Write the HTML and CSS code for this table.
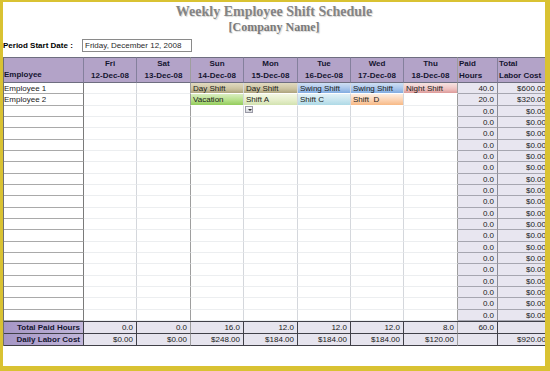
FILE: index.html
```html
<!DOCTYPE html>
<html>
<head>
<meta charset="utf-8">
<link rel="stylesheet" href="styles.css">
</head>
<body>
<div class="frame">
  <div class="sheet">
    <div class="title">Weekly Employee Shift Schedule</div>
    <div class="company">[Company Name]</div>
    <div class="period">
      <span class="plabel">Period Start Date :</span>
      <span class="pbox">Friday, December 12, 2008</span>
    </div>
    <div class="table">
      <div class="row head">
        <div class="c emp"><span>Employee</span></div>
        <div class="c day"><span>Fri</span><span>12-Dec-08</span></div>
        <div class="c day"><span>Sat</span><span>13-Dec-08</span></div>
        <div class="c day"><span>Sun</span><span>14-Dec-08</span></div>
        <div class="c day"><span>Mon</span><span>15-Dec-08</span></div>
        <div class="c day"><span>Tue</span><span>16-Dec-08</span></div>
        <div class="c day"><span>Wed</span><span>17-Dec-08</span></div>
        <div class="c day"><span>Thu</span><span>18-Dec-08</span></div>
        <div class="c lft"><span>Paid</span><span>Hours</span></div>
        <div class="c lft"><span>Total</span><span>Labor Cost</span></div>
      </div>
      <!-- row 1 -->
      <div class="row">
        <div class="c name">Employee 1</div><div class="c"></div><div class="c"></div>
        <div class="c s day-s">Day Shift</div><div class="c s day-s">Day Shift</div>
        <div class="c s swing">Swing Shift</div><div class="c s swing">Swing Shift</div>
        <div class="c s night">Night Shift</div>
        <div class="c num">40.0</div><div class="c num">$600.00</div>
      </div>
      <!-- row 2 -->
      <div class="row t">
        <div class="c name">Employee 2</div><div class="c"></div><div class="c"></div>
        <div class="c s vac">Vacation</div><div class="c s sa">Shift A</div>
        <div class="c s sc">Shift C</div><div class="c s sd">Shift&nbsp; D</div>
        <div class="c"></div>
        <div class="c num">20.0</div><div class="c num">$320.00</div>
      </div>
      <!-- row 3 -->
      <div class="row">
        <div class="c name"></div><div class="c"></div><div class="c"></div><div class="c"></div>
        <div class="c"><span class="dd"></span></div>
        <div class="c"></div><div class="c"></div><div class="c"></div>
        <div class="c num">0.0</div><div class="c num">$0.00</div>
      </div>
      <!-- row 4 --><div class="row"><div class="c name"></div><div class="c"></div><div class="c"></div><div class="c"></div><div class="c"></div><div class="c"></div><div class="c"></div><div class="c"></div><div class="c num">0.0</div><div class="c num">$0.00</div></div>
      <!-- row 5 --><div class="row t"><div class="c name"></div><div class="c"></div><div class="c"></div><div class="c"></div><div class="c"></div><div class="c"></div><div class="c"></div><div class="c"></div><div class="c num">0.0</div><div class="c num">$0.00</div></div>
      <!-- row 6 --><div class="row"><div class="c name"></div><div class="c"></div><div class="c"></div><div class="c"></div><div class="c"></div><div class="c"></div><div class="c"></div><div class="c"></div><div class="c num">0.0</div><div class="c num">$0.00</div></div>
      <!-- row 7 --><div class="row"><div class="c name"></div><div class="c"></div><div class="c"></div><div class="c"></div><div class="c"></div><div class="c"></div><div class="c"></div><div class="c"></div><div class="c num">0.0</div><div class="c num">$0.00</div></div>
      <!-- row 8 --><div class="row t"><div class="c name"></div><div class="c"></div><div class="c"></div><div class="c"></div><div class="c"></div><div class="c"></div><div class="c"></div><div class="c"></div><div class="c num">0.0</div><div class="c num">$0.00</div></div>
      <!-- row 9 --><div class="row"><div class="c name"></div><div class="c"></div><div class="c"></div><div class="c"></div><div class="c"></div><div class="c"></div><div class="c"></div><div class="c"></div><div class="c num">0.0</div><div class="c num">$0.00</div></div>
      <!-- row 10 --><div class="row"><div class="c name"></div><div class="c"></div><div class="c"></div><div class="c"></div><div class="c"></div><div class="c"></div><div class="c"></div><div class="c"></div><div class="c num">0.0</div><div class="c num">$0.00</div></div>
      <!-- row 11 --><div class="row t"><div class="c name"></div><div class="c"></div><div class="c"></div><div class="c"></div><div class="c"></div><div class="c"></div><div class="c"></div><div class="c"></div><div class="c num">0.0</div><div class="c num">$0.00</div></div>
      <!-- row 12 --><div class="row"><div class="c name"></div><div class="c"></div><div class="c"></div><div class="c"></div><div class="c"></div><div class="c"></div><div class="c"></div><div class="c"></div><div class="c num">0.0</div><div class="c num">$0.00</div></div>
      <!-- row 13 --><div class="row"><div class="c name"></div><div class="c"></div><div class="c"></div><div class="c"></div><div class="c"></div><div class="c"></div><div class="c"></div><div class="c"></div><div class="c num">0.0</div><div class="c num">$0.00</div></div>
      <!-- row 14 --><div class="row t"><div class="c name"></div><div class="c"></div><div class="c"></div><div class="c"></div><div class="c"></div><div class="c"></div><div class="c"></div><div class="c"></div><div class="c num">0.0</div><div class="c num">$0.00</div></div>
      <!-- row 15 --><div class="row"><div class="c name"></div><div class="c"></div><div class="c"></div><div class="c"></div><div class="c"></div><div class="c"></div><div class="c"></div><div class="c"></div><div class="c num">0.0</div><div class="c num">$0.00</div></div>
      <!-- row 16 --><div class="row"><div class="c name"></div><div class="c"></div><div class="c"></div><div class="c"></div><div class="c"></div><div class="c"></div><div class="c"></div><div class="c"></div><div class="c num">0.0</div><div class="c num">$0.00</div></div>
      <!-- row 17 --><div class="row t"><div class="c name"></div><div class="c"></div><div class="c"></div><div class="c"></div><div class="c"></div><div class="c"></div><div class="c"></div><div class="c"></div><div class="c num">0.0</div><div class="c num">$0.00</div></div>
      <!-- row 18 --><div class="row"><div class="c name"></div><div class="c"></div><div class="c"></div><div class="c"></div><div class="c"></div><div class="c"></div><div class="c"></div><div class="c"></div><div class="c num">0.0</div><div class="c num">$0.00</div></div>
      <!-- row 19 --><div class="row"><div class="c name"></div><div class="c"></div><div class="c"></div><div class="c"></div><div class="c"></div><div class="c"></div><div class="c"></div><div class="c"></div><div class="c num">0.0</div><div class="c num">$0.00</div></div>
      <!-- row 20 --><div class="row t"><div class="c name"></div><div class="c"></div><div class="c"></div><div class="c"></div><div class="c"></div><div class="c"></div><div class="c"></div><div class="c"></div><div class="c num">0.0</div><div class="c num">$0.00</div></div>
      <!-- row 21 --><div class="row"><div class="c name"></div><div class="c"></div><div class="c"></div><div class="c"></div><div class="c"></div><div class="c"></div><div class="c"></div><div class="c"></div><div class="c num">0.0</div><div class="c num">$0.00</div></div>
      <div class="foot">
        <div class="row frow">
          <div class="c flabel">Total Paid Hours</div>
          <div class="c fv">0.0</div><div class="c fv">0.0</div><div class="c fv">16.0</div>
          <div class="c fv">12.0</div><div class="c fv">12.0</div><div class="c fv">12.0</div>
          <div class="c fv">8.0</div><div class="c fv">60.0</div><div class="c fv"></div>
        </div>
        <div class="row frow">
          <div class="c flabel">Daily Labor Cost</div>
          <div class="c fv">$0.00</div><div class="c fv">$0.00</div><div class="c fv">$248.00</div>
          <div class="c fv">$184.00</div><div class="c fv">$184.00</div><div class="c fv">$184.00</div>
          <div class="c fv">$120.00</div><div class="c fv"></div><div class="c fv">$920.00</div>
        </div>
      </div>
    </div>
  </div>
</div>
</body>
</html>
```

FILE: styles.css
```css
html, body {
  margin: 0;
  padding: 0;
  background: #ffffff;
}

.frame {
  width: 550px;
  height: 371px;
  box-sizing: border-box;
  border-style: solid;
  border-color: #d9c232;
  border-width: 2px 5px 5px 3px;
  background: #ffffff;
  overflow: hidden;
}

.sheet {
  width: 560px;
  font-family: "Liberation Sans", Arial, sans-serif;
  font-size: 8px;
  color: #1a1a1a;
}

.title {
  width: 542px;
  margin-top: 2px;
  height: 16px;
  line-height: 16px;
  text-align: center;
  font-family: "Liberation Serif", "Times New Roman", serif;
  font-weight: bold;
  font-size: 14px;
  color: #848484;
  text-shadow: 1px 1px 1px #d4d4d4;
}

.company {
  width: 542px;
  height: 14px;
  line-height: 14px;
  text-align: center;
  font-family: "Liberation Serif", "Times New Roman", serif;
  font-weight: bold;
  font-size: 12px;
  color: #7a7a7a;
  text-shadow: 1px 1px 1px #d4d4d4;
}

.period {
  margin-top: 5px;
  height: 13px;
  display: flex;
  align-items: center;
}

.plabel {
  width: 79px;
  font-weight: bold;
  color: #000000;
}

.pbox {
  width: 106px;
  height: 11px;
  line-height: 11px;
  border: 1px solid #8a8a8a;
  padding-left: 2px;
  color: #2a2a2a;
  box-sizing: content-box;
}

.table {
  margin-top: 5px;
  border-left: 1px solid #707070;
  width: 545px;
  display: flex;
  flex-direction: column;
}

.row {
  display: grid;
  grid-template-columns: 80px 53px 54px 53px 54px 53px 53px 54px 40px 51px;
  height: 11px;
  flex: none;
}

.row.t {
  height: 12px;
}

.c {
  box-sizing: border-box;
  border-right: 1px solid #d4d7dc;
  border-bottom: 1px solid #eceef0;
  display: flex;
  align-items: center;
  padding: 0 2px;
  white-space: nowrap;
  overflow: hidden;
  position: relative;
  min-height: 0;
}

.c.name {
  border-right: 1px solid #7a7a7a;
  border-bottom: 1px solid #a9a9a9;
  padding-left: 0;
}

.row .c:nth-child(3),
.row .c:nth-child(8) {
  border-right-color: #9e9e9e;
}

.c.num {
  justify-content: flex-end;
  background: #e8e6f0;
  border-right: 1px solid #8c8c96;
  border-bottom: 1px solid #a6a6b0;
  padding-right: 3px;
}

.row .c.num:last-child {
  padding-right: 2px;
}

/* header */
.row.head {
  height: 26px;
}

.head .c {
  background: #b3a3c8;
  border-top: 1px solid #6e6e80;
  border-right: 1px solid #84809c;
  border-bottom: 1px solid #6e6e80;
  font-weight: bold;
  color: #151530;
  flex-direction: column;
  justify-content: center;
  line-height: 12px;
}

.head .c.day {
  align-items: center;
}

.head .c.lft {
  align-items: flex-start;
  padding-left: 1px;
}

.head .c.emp {
  align-items: flex-start;
  justify-content: flex-end;
  padding-left: 0;
  padding-bottom: 1px;
}

/* shift fills */
.c.s {
  padding-left: 2px;
  border-bottom-color: #ffffff;
}

.day-s { background: linear-gradient(to bottom, #e2dbc1 0%, #cbc29f 60%, #ada37e 100%); }
.swing { background: linear-gradient(to bottom, #d0e0f4 0%, #a5c3ea 60%, #82ace0 100%); }
.night { background: linear-gradient(to bottom, #f6e4e3 0%, #eec2c1 60%, #dc9a99 100%); }
.vac   { background: linear-gradient(to bottom, #daeec0 0%, #b3de86 60%, #93cc5c 100%); }
.sa    { background: linear-gradient(to bottom, #f4f7e4 0%, #e4edc8 60%, #d2e2b0 100%); }
.sc    { background: linear-gradient(to bottom, #e4f2f7 0%, #c6e4ee 60%, #aed9e6 100%); }
.sd    { background: linear-gradient(to bottom, #feeee2 0%, #fbd0ae 60%, #f7b985 100%); }

/* dropdown arrow button */
.dd {
  position: absolute;
  left: 1px;
  top: 0px;
  width: 8px;
  height: 7px;
  box-sizing: border-box;
  border: 1px solid #9a9aa6;
  background: linear-gradient(to bottom, #f8f8fa, #d6d8de);
}

.dd::after {
  content: "";
  position: absolute;
  left: 1.5px;
  top: 1.5px;
  border-left: 2px solid transparent;
  border-right: 2px solid transparent;
  border-top: 2px solid #333333;
}

/* footer */
.foot {
  border-top: 1px solid #404048;
  display: flex;
  flex-direction: column;
}

.row.frow {
  height: 12px;
}

.frow .c {
  border-right: 1px solid #404048;
  border-bottom: 1px solid #404048;
}

.frow .c.flabel {
  justify-content: flex-end;
  font-weight: bold;
  color: #151530;
  padding-right: 3px;
  background: linear-gradient(to right, #a596c6, #c2b7da);
}

.frow .c.fv {
  justify-content: flex-end;
  background: #e6e4ee;
  padding-right: 3px;
}

.frow .c.fv:last-child {
  padding-right: 2px;
}
```
